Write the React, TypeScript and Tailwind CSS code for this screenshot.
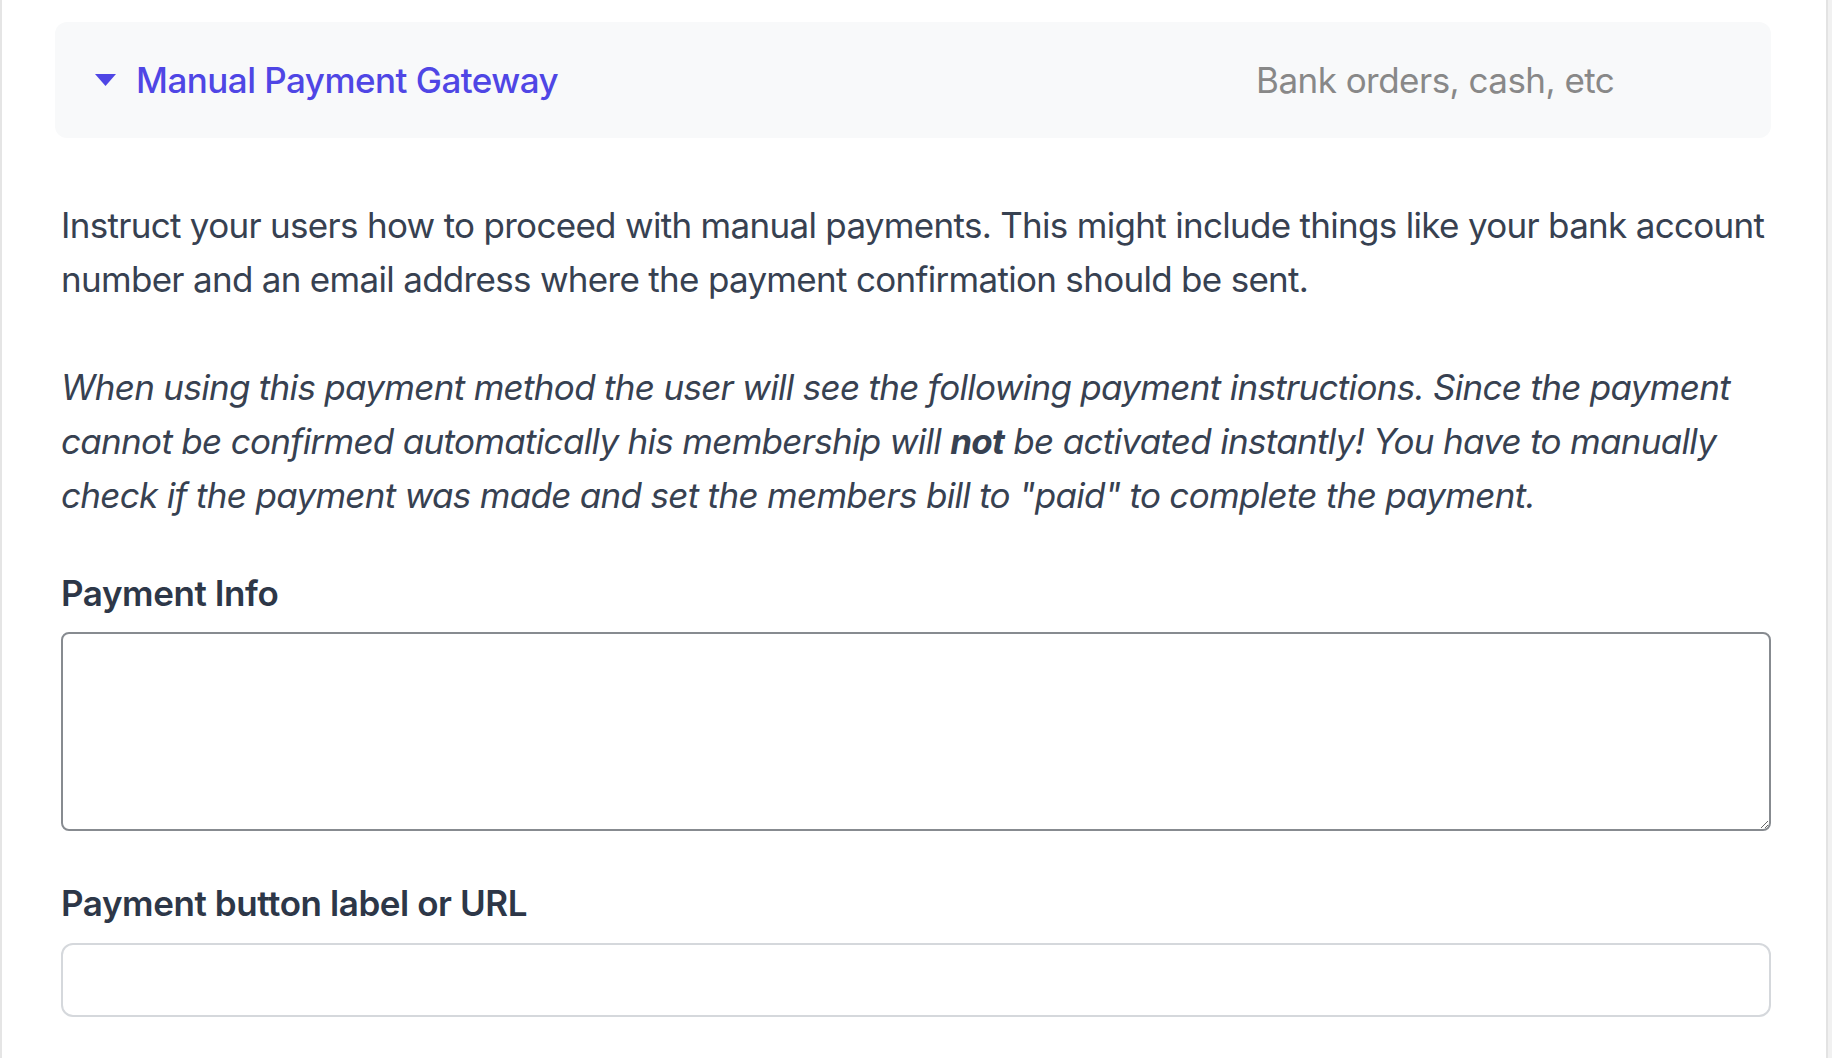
import { useState } from "react";

function CaretDown() {
  return (
    <svg width="21" height="12" viewBox="0 0 21 12" className="shrink-0">
      <path d="M0 0h21L10.5 12z" fill="#4f46e5" />
    </svg>
  );
}

export default function App() {
  const [open] = useState(true);
  const [info, setInfo] = useState("");
  const [buttonLabel, setButtonLabel] = useState("");

  return (
    <div
      className="flex min-h-[1058px] w-full bg-white text-[35px] text-[#374151]"
      style={{ fontFamily: "Inter, 'Noto Sans', sans-serif" }}
    >
      <div className="w-[2px] shrink-0 bg-[#e5e5e5]" />

      <div className="ml-[53px] w-[1716px] shrink-0 pt-[22px]">
        {/* Gateway header */}
        <div className="flex h-[116px] items-center rounded-[12px] bg-[#f8f9fa] pl-[40px] pr-[40px] tracking-[-0.015em]">
          <div className="flex flex-1 items-center gap-[20px]">
            <CaretDown />
            <span className="font-medium text-[#4f46e5]">Manual Payment Gateway</span>
          </div>
          <span className="w-[475px] text-[#888888]">Bank orders, cash, etc</span>
        </div>

        {open && (
          <div className="pl-[6px]">
            <p className="mt-[60px] whitespace-nowrap leading-[54px] tracking-[-0.02em]">
              Instruct your users how to proceed with manual payments. This might include things like your bank account
              <br />
              number and an email address where the payment confirmation should be sent.
            </p>
            <p className="mt-[54px] whitespace-nowrap italic leading-[54px] tracking-[-0.02em]">
              When using this payment method the user will see the following payment instructions. Since the payment
              <br />
              cannot be confirmed automatically his membership will <b>not</b> be activated instantly! You have to manually
              <br />
              check if the payment was made and set the members bill to "paid" to complete the payment.
            </p>

            <label className="mt-[44px] block font-semibold leading-[54px] tracking-[-0.012em] text-[#2d3748]">
              Payment Info
            </label>
            <textarea
              className="mt-[12px] block h-[199px] w-full rounded-[8px] border-2 border-[#878b90] bg-white px-[20px] py-[14px]"
              value={info}
              onChange={(e) => setInfo(e.target.value)}
            />

            <label className="mt-[45px] block font-semibold leading-[54px] tracking-[-0.012em] text-[#2d3748]">
              Payment button label or URL
            </label>
            <input
              type="text"
              className="mt-[13px] block h-[74px] w-full rounded-[12px] border-2 border-[#d5d8dc] bg-white px-[20px]"
              value={buttonLabel}
              onChange={(e) => setButtonLabel(e.target.value)}
            />
          </div>
        )}
      </div>

      <div className="flex-1" />
      <div className="w-[6px] shrink-0 border-l-2 border-[#e3e3e3] bg-[#f1f1f1]" />
    </div>
  );
}
